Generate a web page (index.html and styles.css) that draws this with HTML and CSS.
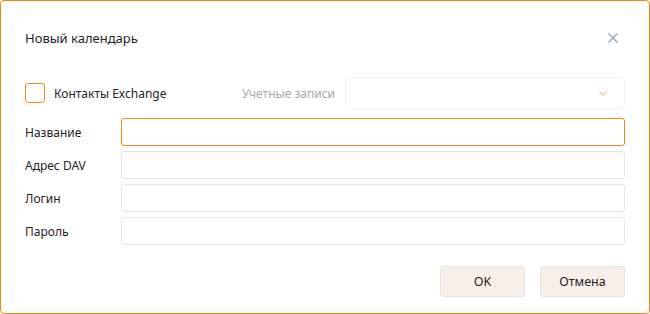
FILE: index.html
```html
<!DOCTYPE html>
<html lang="ru">
<head>
<meta charset="utf-8">
<title>Новый календарь</title>
<link rel="stylesheet" href="styles.css">
</head>
<body>
<div class="dialog">
  <div class="header">
    <div class="title">Новый календарь</div>
    <button class="close" aria-label="Закрыть">
      <svg width="10" height="10" viewBox="0 0 10 10"><path d="M0.5 0.5 L9.5 9.5 M9.5 0.5 L0.5 9.5" stroke="#8fa3b3" stroke-width="1.3" fill="none"/></svg>
    </button>
  </div>
  <div class="exchange-row">
    <label class="check-group">
      <span class="checkbox"></span>
      <span class="check-label">Контакты Exchange</span>
    </label>
    <div class="acct-group">
      <span class="acct-label">Учетные записи</span>
      <div class="select">
        <svg width="8" height="5" viewBox="0 0 8 5"><path d="M0.6 0.6 L4 4 L7.4 0.6" stroke="#f6c48e" stroke-width="1.3" fill="none"/></svg>
      </div>
    </div>
  </div>
  <div class="form">
    <span class="label">Название</span><div class="input active"></div>
    <span class="label">Адрес DAV</span><div class="input"></div>
    <span class="label">Логин</span><div class="input"></div>
    <span class="label">Пароль</span><div class="input"></div>
  </div>
  <div class="buttons">
    <button class="btn">OK</button>
    <button class="btn">Отмена</button>
  </div>
</div>
</body>
</html>
```
FILE: styles.css
```css
html, body {
  margin: 0;
  padding: 0;
  background: #ffffff;
}
body {
  font-family: "Noto Sans", "Open Sans", sans-serif;
  font-size: 12px;
  color: #1f2328;
}
.dialog {
  box-sizing: border-box;
  width: 650px;
  height: 314px;
  border: 1px solid #ee8a12;
  border-radius: 4px;
  padding: 0 24px 16px 24px;
  display: flex;
  flex-direction: column;
}
.header {
  margin-top: 25px;
  height: 24px;
  display: flex;
  align-items: center;
  justify-content: space-between;
}
.title {
  font-size: 13px;
  line-height: 18px;
}
.close {
  width: 24px;
  height: 24px;
  padding: 0;
  border: 0;
  background: transparent;
  display: flex;
  align-items: center;
  justify-content: center;
}
.exchange-row {
  margin-top: 27px;
  height: 32px;
  display: flex;
  align-items: center;
}
.check-group {
  display: flex;
  align-items: center;
}
.checkbox {
  box-sizing: border-box;
  width: 20px;
  height: 20px;
  border: 1px solid #ee8a12;
  border-radius: 3px;
}
.check-label {
  margin-left: 9px;
}
.acct-group {
  margin-left: auto;
  display: flex;
  align-items: center;
}
.acct-label {
  color: #a8a8a8;
}
.select {
  box-sizing: border-box;
  margin-left: 10px;
  width: 280px;
  height: 32px;
  border: 1px solid #f0f0f0;
  border-radius: 4px;
  display: flex;
  align-items: center;
  justify-content: flex-end;
  padding-right: 17px;
}
.form {
  margin-top: 9px;
  display: grid;
  grid-template-columns: 96px 1fr;
  grid-auto-rows: 28px;
  row-gap: 5px;
  align-items: center;
}
.input {
  box-sizing: border-box;
  height: 28px;
  border: 1px solid #e3e6e9;
  border-radius: 3px;
}
.input.active {
  border-color: #ee8a12;
}
.buttons {
  margin-top: auto;
  display: flex;
  justify-content: flex-end;
  gap: 15px;
}
.btn {
  box-sizing: border-box;
  width: 85px;
  height: 31px;
  background: #f8f0e8;
  border: 1px solid #e4e4e4;
  border-radius: 3px;
  font-family: inherit;
  font-size: 12.5px;
  color: #1f2328;
  padding: 0;
}
```
